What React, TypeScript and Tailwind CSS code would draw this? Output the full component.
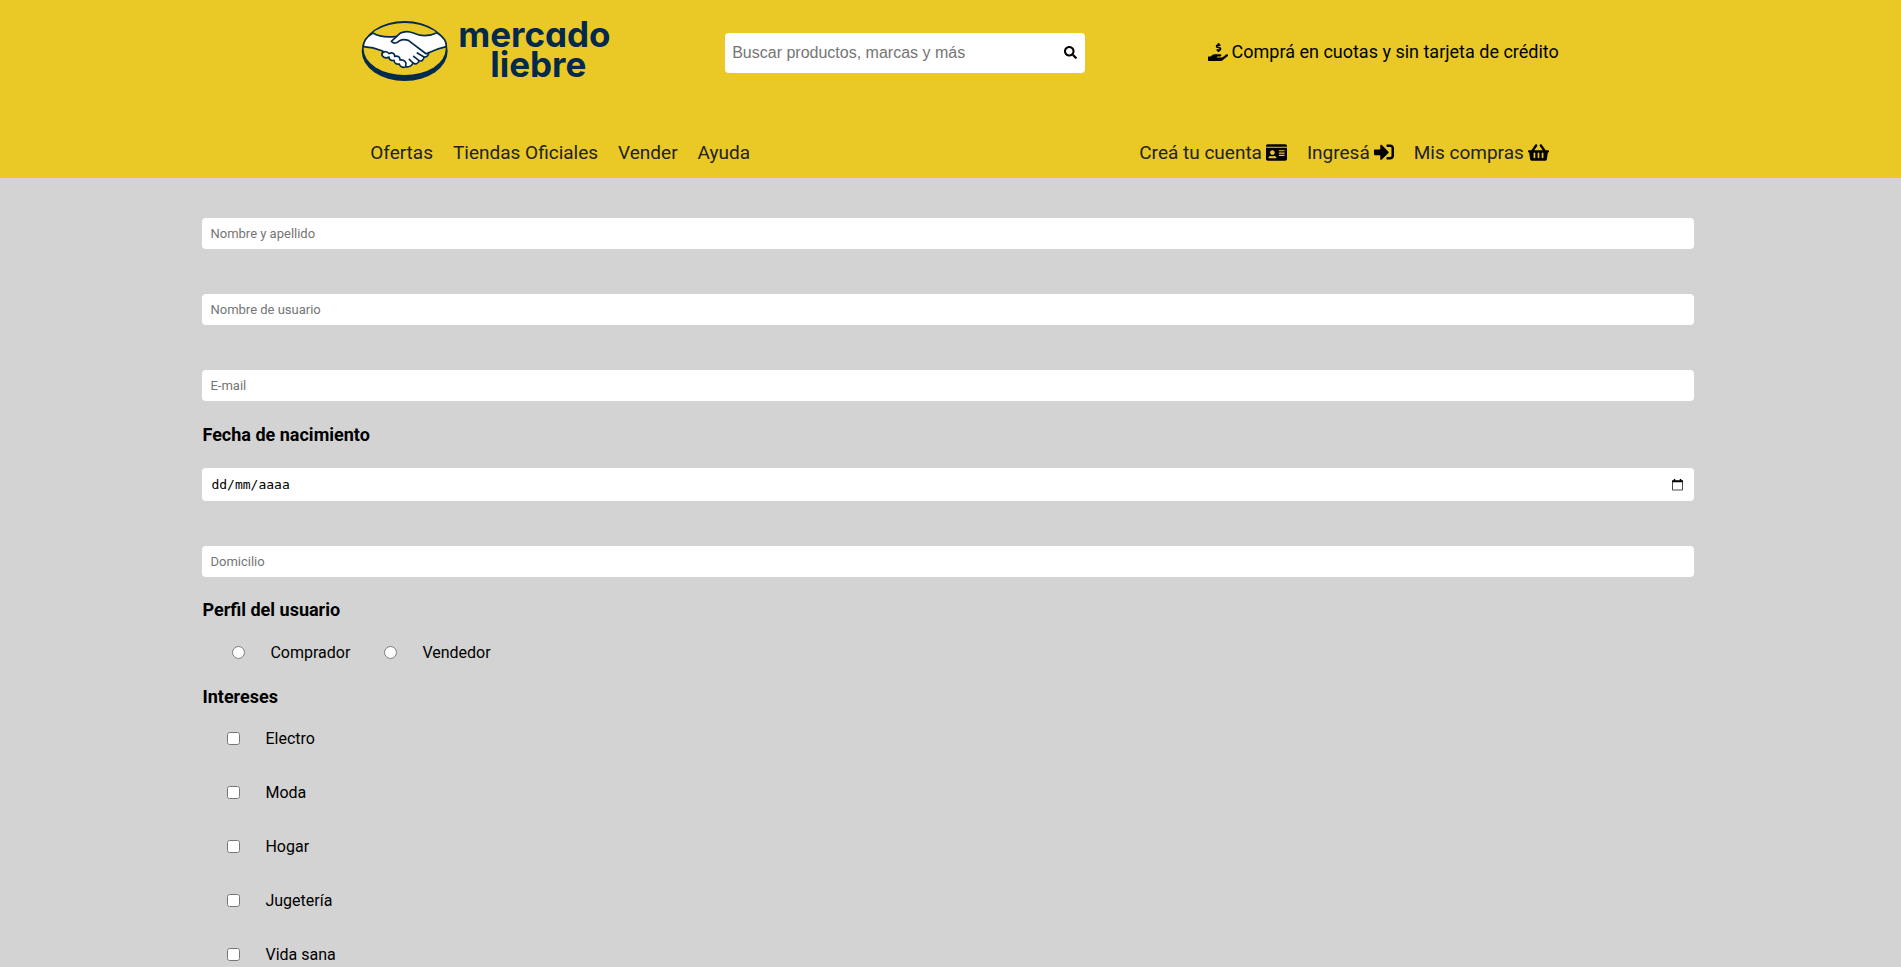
import { FaHandHoldingUsd, FaIdCard, FaSearch, FaShoppingBasket, FaSignInAlt } from "react-icons/fa";

const interests = ["Electro", "Moda", "Hogar", "Jugetería", "Vida sana"];

function Logo() {
  return (
    <a href="#inicio" className="flex w-[248px] shrink-0 items-start text-[#03294d]">
      <svg className="h-16 w-[97px] shrink-0" viewBox="0 0 97 64" aria-hidden="true">
        <g transform="translate(-5 -4) scale(0.33333)" stroke="#03294d" strokeLinecap="round" strokeLinejoin="round">
          <ellipse cx="146" cy="111" rx="129" ry="90" fill="#03294d" stroke="none" />
          <ellipse cx="146" cy="105" rx="123" ry="78" fill="#eac927" stroke="none" />
          <path
            d="M51 57 C72 70 98 70 122 67 L132 58 C146 50 160 52 172 57 C196 68 218 68 243 56 C261 67 272 81 271 98 C252 102 236 108 218 116 C218 126 211 130 204 129 C203 139 196 143 189 140 C186 150 178 152 171 147 C167 155 160 160 150 158 C139 163 131 157 130 150 C121 152 114 147 114 139 C105 141 98 136 99 129 C88 135 76 128 78 119 C79 114 83 112 80 111 C60 103 43 99 22 98 C22 81 34 67 51 57 Z"
            fill="#fff"
            strokeWidth="5"
          />
          <g fill="none" strokeWidth="5">
            <path d="M122 67 L106 82 C112 91 124 87 131 80 C139 76 150 77 157 79 L207 117 C212 121 215 119 218 116" />
            <path d="M80 117 C85 111 95 112 99 119 C108 113 117 119 116 127 C126 125 133 129 132 138 C145 136 153 145 149 154" />
            <path d="M184 117 L204 129 M173 127 L189 140 M160 136 L171 147" />
          </g>
        </g>
      </svg>
      <span className="flex flex-col pt-px font-[Inter,sans-serif] text-[35px] leading-[30px] font-bold [font-feature-settings:'cv11']">
        <span>mercado</span>
        <span className="pl-8">liebre</span>
      </span>
    </a>
  );
}

function Field({ label, type = "text" }: { label: string; type?: string }) {
  return (
    <input
      type={type}
      aria-label={label}
      placeholder={label}
      className="block h-[31px] w-full rounded bg-white px-2 text-[13px] placeholder:text-[#757575]"
    />
  );
}

export default function App() {
  return (
    <div className="min-h-screen bg-[#d3d3d3] font-[Roboto,sans-serif] text-base text-black">
      <header className="bg-[#eac927] pr-[18%] pl-[19%]">
        <div className="flex h-[104px] items-start pt-[18px]">
          <Logo />
          <form className="mt-[15px] ml-[116px] flex h-10 w-[360px] items-center rounded bg-white pr-2 pl-[7px]">
            <input
              type="search"
              aria-label="Buscar"
              placeholder="Buscar productos, marcas y más"
              className="min-w-0 flex-1 font-['Liberation_Sans',sans-serif] text-base placeholder:text-[#757575]"
            />
            <button type="submit" aria-label="Buscar" className="pb-0.5 text-[13px]">
              <FaSearch />
            </button>
          </form>
          <a href="#cuotas" className="mt-5 ml-auto flex items-center gap-1 text-lg whitespace-nowrap">
            <FaHandHoldingUsd className="text-xl" />
            Comprá en cuotas y sin tarjeta de crédito
          </a>
        </div>
        <nav className="flex h-[74px] items-start justify-between pt-[35px] pr-[10px] pl-[9px] text-[19px] text-[#222]">
          <div className="flex gap-5">
            <a href="#ofertas">Ofertas</a>
            <a href="#tiendas">Tiendas Oficiales</a>
            <a href="#vender">Vender</a>
            <a href="#ayuda">Ayuda</a>
          </div>
          <div className="flex gap-5">
            <a href="#cuenta" className="flex items-center gap-1">
              Creá tu cuenta <FaIdCard className="mb-0.5 text-[21px] text-black" />
            </a>
            <a href="#ingresa" className="flex items-center gap-1">
              Ingresá <FaSignInAlt className="mb-0.5 text-[20px] text-black" />
            </a>
            <a href="#compras" className="flex items-center gap-1">
              Mis compras <FaShoppingBasket className="mb-0.5 text-[21px] text-black" />
            </a>
          </div>
        </nav>
      </header>
      <main className="mr-[10.9%] ml-[10.65%] pt-10">
        <form>
          <div className="flex flex-col gap-[45px]">
            <Field label="Nombre y apellido" />
            <Field label="Nombre de usuario" />
            <Field label="E-mail" type="email" />
          </div>
          <label htmlFor="birth" className="block py-[21px] text-lg leading-[25px] font-bold">
            Fecha de nacimiento
          </label>
          <div className="mb-[45px] flex h-[33px] items-center rounded bg-white pr-[11px] pl-[9px]">
            <input
              id="birth"
              type="text"
              inputMode="numeric"
              placeholder="dd/mm/aaaa"
              className="min-w-0 flex-1 font-['DejaVu_Sans_Mono',monospace] text-[13px] placeholder:text-black"
            />
            <button type="button" aria-label="Abrir calendario">
              <svg className="h-3 w-[11px]" viewBox="0 0 11 12" fill="none" stroke="#000">
                <path d="M0.5 1.5h10v9.5h-10z" strokeOpacity="0.7" />
                <path d="M0 2.5h11M2.5 0v2M8.5 0v2" strokeWidth="1.5" />
              </svg>
            </button>
          </div>
          <Field label="Domicilio" />
          <fieldset>
            <legend className="py-5 text-lg leading-[25px] font-bold">Perfil del usuario</legend>
            <div className="flex h-[22px] items-center gap-[34px] pl-[30px]">
              <label className="flex items-center gap-[25px]">
                <input type="radio" name="perfil" className="mb-0.5 size-[13px]" />
                Comprador
              </label>
              <label className="flex items-center gap-[25px]">
                <input type="radio" name="perfil" className="mb-0.5 size-[13px]" />
                Vendedor
              </label>
            </div>
          </fieldset>
          <fieldset>
            <legend className="py-5 text-lg leading-[25px] font-bold">Intereses</legend>
            <div className="flex flex-col gap-[34px] pl-[25px]">
              {interests.map((name) => (
                <label key={name} className="flex h-5 items-center gap-[25px] self-start">
                  <input type="checkbox" name="intereses" value={name} className="mb-0.5 size-[13px]" />
                  {name}
                </label>
              ))}
            </div>
          </fieldset>
        </form>
      </main>
    </div>
  );
}
